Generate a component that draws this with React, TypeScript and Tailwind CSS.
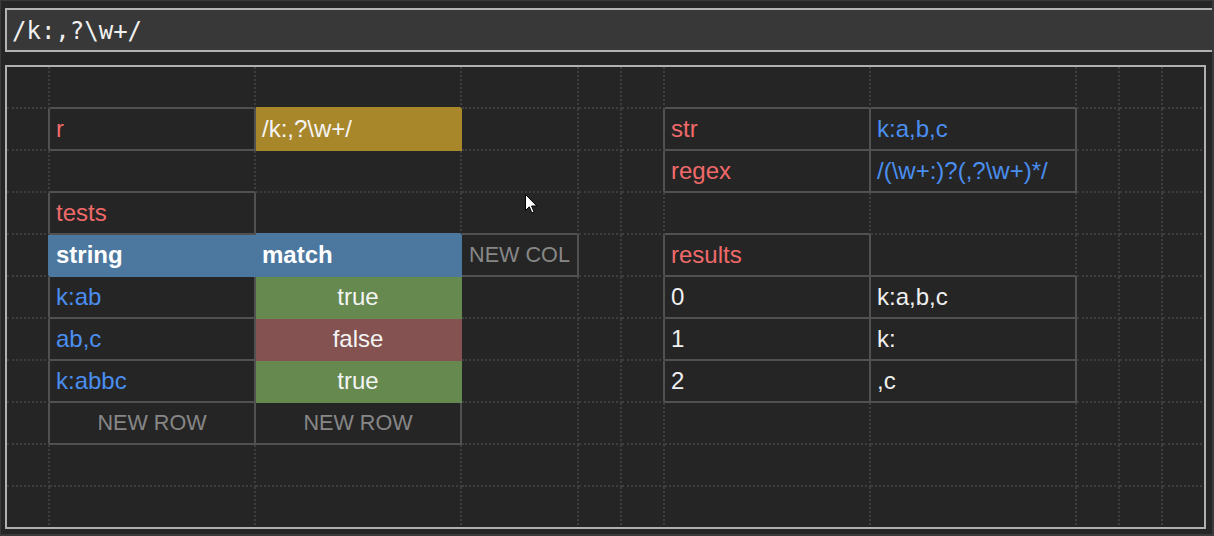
import React from "react";

type Kind = "label" | "blue" | "white" | "new" | "yellow" | "header" | "true" | "false";
type Cell = { text: string; kind: Kind };

const NROWS = 11;
const NCOLS = 11;

const CELLS: Record<string, Cell> = {
  "1,1": { text: "r", kind: "label" },
  "1,2": { text: "/k:,?\\w+/", kind: "yellow" },
  "1,6": { text: "str", kind: "label" },
  "1,7": { text: "k:a,b,c", kind: "blue" },
  "2,6": { text: "regex", kind: "label" },
  "2,7": { text: "/(\\w+:)?(,?\\w+)*/", kind: "blue" },
  "3,1": { text: "tests", kind: "label" },
  "4,1": { text: "string", kind: "header" },
  "4,2": { text: "match", kind: "header" },
  "4,3": { text: "NEW COL", kind: "new" },
  "4,6": { text: "results", kind: "label" },
  "5,1": { text: "k:ab", kind: "blue" },
  "5,2": { text: "true", kind: "true" },
  "6,1": { text: "ab,c", kind: "blue" },
  "6,2": { text: "false", kind: "false" },
  "7,1": { text: "k:abbc", kind: "blue" },
  "7,2": { text: "true", kind: "true" },
  "8,1": { text: "NEW ROW", kind: "new" },
  "8,2": { text: "NEW ROW", kind: "new" },
  "5,6": { text: "0", kind: "white" },
  "5,7": { text: "k:a,b,c", kind: "white" },
  "6,6": { text: "1", kind: "white" },
  "6,7": { text: "k:", kind: "white" },
  "7,6": { text: "2", kind: "white" },
  "7,7": { text: ",c", kind: "white" },
};

type Line = "dotted" | "gray" | "yellow" | "header" | "true" | "false";

const RIGHT: Record<Line, string> = {
  dotted: "[border-right-style:dotted] border-r-[#3e3e3e]",
  gray: "[border-right-style:solid] border-r-[#515151]",
  yellow: "[border-right-style:solid] border-r-[#a8872a]",
  header: "[border-right-style:solid] border-r-[#4c78a0]",
  true: "[border-right-style:solid] border-r-[#65894f]",
  false: "[border-right-style:solid] border-r-[#845250]",
};

const BOTTOM: Record<Line, string> = {
  dotted: "[border-bottom-style:dotted] border-b-[#3e3e3e]",
  gray: "[border-bottom-style:solid] border-b-[#515151]",
  yellow: "[border-bottom-style:solid] border-b-[#a8872a]",
  header: "[border-bottom-style:solid] border-b-[#4c78a0]",
  true: "[border-bottom-style:solid] border-b-[#65894f]",
  false: "[border-bottom-style:solid] border-b-[#845250]",
};

const CONTENT: Record<Kind, string> = {
  label: "justify-start pl-[6px] text-[#f06a6a]",
  blue: "justify-start pl-[6px] text-[#4a8ef0]",
  white: "justify-start pl-[6px] text-[#f0f0f0]",
  new: "justify-center text-[#878787] text-[21.6px]",
  yellow: "justify-start pl-[6px] bg-[#a8872a] text-[#f4f4f4]",
  header: "justify-start pl-[6px] bg-[#4c78a0] text-white font-bold",
  true: "justify-center bg-[#65894f] text-[#f4f4f4]",
  false: "justify-center bg-[#845250] text-[#f4f4f4]",
};

const isColored = (k?: Kind) =>
  k === "yellow" || k === "header" || k === "true" || k === "false";
const isBoxed = (k?: Kind) =>
  k === "label" || k === "blue" || k === "white" || k === "new";

function lineFor(a?: Cell, b?: Cell): Line {
  if (a && isColored(a.kind)) return a.kind as Line;
  if ((a && isBoxed(a.kind)) || (b && isBoxed(b.kind))) return "gray";
  if (b && isColored(b.kind)) return b.kind as Line;
  return "dotted";
}

function Cursor() {
  return (
    <svg
      className="absolute left-[524px] top-[193px]"
      width="13"
      height="20"
      viewBox="0 0 13 20"
    >
      <path
        d="M0.5 0.5 L0.5 16.5 L4.3 12.8 L6.9 18.9 L9.1 18 L6.6 12 L11.8 12 Z"
        fill="#ffffff"
        stroke="#000000"
        strokeWidth="1"
        strokeLinejoin="miter"
      />
    </svg>
  );
}

export default function App() {
  const cells: React.ReactNode[] = [];
  for (let r = 0; r < NROWS; r++) {
    for (let c = 0; c < NCOLS; c++) {
      const cell = CELLS[`${r},${c}`];
      const right = lineFor(cell, CELLS[`${r},${c + 1}`]);
      const bottom = lineFor(cell, CELLS[`${r + 1},${c}`]);
      const content = cell ? CONTENT[cell.kind] : "";
      cells.push(
        <div
          key={`${r}-${c}`}
          className={`box-border flex items-center overflow-hidden whitespace-nowrap border-r-2 border-b-2 ${RIGHT[right]} ${BOTTOM[bottom]} ${content}`}
        >
          {cell ? cell.text : null}
        </div>
      );
    }
  }

  return (
    <div className="relative box-border flex h-[536px] w-[1214px] flex-col overflow-hidden border-l border-t border-r-2 border-b-2 border-[#3a3a3a] bg-[#262626]">
      <div className="ml-[4px] mt-[7px] box-border flex h-[44px] w-[1240px] shrink-0 items-center border-2 border-[#b3b3b3] bg-[#383838] pl-[5px] pt-[1px] font-['DejaVu_Sans_Mono',monospace] text-[24px] text-[#f0f0f0]">
        /k:,?\w+/
      </div>
      <div className="ml-[4px] mt-[13px] box-border h-[464px] w-[1201px] shrink-0 overflow-hidden border-2 border-[#b0b0b0] bg-[#252525]">
        <div className="grid grid-cols-[43px_206px_206px_117px_43px_43px_206px_206px_43px_43px_43px] auto-rows-[42px] font-['Liberation_Sans',Arial,sans-serif] text-[24px] leading-normal">
          {cells}
        </div>
      </div>
      <Cursor />
    </div>
  );
}
